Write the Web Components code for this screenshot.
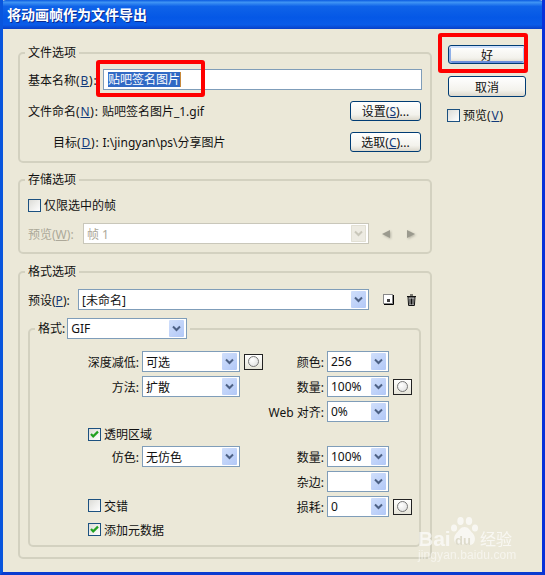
<!DOCTYPE html>
<html>
<head>
<meta charset="utf-8">
<title>export frames</title>
<style>
  html, body { margin: 0; padding: 0; background: #ebe8d8; }
  body { font: 12px "Noto Sans", "Noto Sans CJK SC", sans-serif; color: #111; }
</style>
</head>
<body>
<xp-dialog></xp-dialog>

<script>
const FONT = '"Noto Sans", "Noto Sans CJK SC", sans-serif';

class XpButton extends HTMLElement {
  constructor() {
    super();
    this.attachShadow({ mode: 'open' });
    this.shadowRoot.innerHTML = `
      <style>
        :host { display: flex; box-sizing: border-box; height: 20px; border: 1px solid #003c74; border-radius: 3px;
          background: linear-gradient(#fff, #f3f2ec 70%, #dcd8cc); align-items: center; justify-content: center;
          font: 12px ${FONT}; color: #111; }
        :host([default]) { box-shadow: inset 0 2px 0 #cfe0fb, inset 2px 0 0 #8fb0e8, inset -2px 0 0 #a9c4f0, inset 0 -2px 0 #6b8fdc; }
      </style>
      <span><slot></slot></span>`;
  }
}

class XpCheck extends HTMLElement {
  constructor() {
    super();
    this.attachShadow({ mode: 'open' });
    const tick = this.hasAttribute('checked')
      ? '<svg viewBox="0 0 11 11" width="11" height="11"><path d="M2 5l2.2 2.400L9 2.600" fill="none" stroke="#21a121" stroke-width="2.200"/></svg>'
      : '';
    this.shadowRoot.innerHTML = `
      <style>
        :host { display: flex; align-items: center; gap: 3px; height: 14px; font: 12px ${FONT}; color: #111; }
        .box { box-sizing: border-box; width: 13px; height: 13px; border: 1px solid #1c5180;
          background: linear-gradient(135deg, #dcdcd7, #fff); display: flex; }
      </style>
      <span class="box">${tick}</span><span><slot></slot></span>`;
  }
}

class XpSelect extends HTMLElement {
  constructor() {
    super();
    this.attachShadow({ mode: 'open' });
    this.shadowRoot.innerHTML = `
      <style>
        :host { display: flex; box-sizing: border-box; height: 21px; border: 1px solid #7f9db9; background: #fff;
          padding: 1px 2px 1px 3px; align-items: center; font: 12px ${FONT}; color: #111; }
        .val { flex: 1; white-space: nowrap; overflow: hidden; }
        .arrow { width: 15px; height: 17px; border-radius: 1px; background: linear-gradient(135deg, #d0dffb, #b2c8f7);
          display: flex; align-items: center; justify-content: center; }
        :host([disabled]) { border-color: #c9c7ba; color: #aca899; }
        :host([disabled]) .arrow { background: #edebe2; box-shadow: inset 0 0 0 1px #e2e0d4; }
        :host([disabled]) path { stroke: #c9c7ba; }
      </style>
      <span class="val"><slot></slot></span>
      <span class="arrow"><svg width="9" height="7" viewBox="0 0 9 7"><path d="M1 1.500l3.500 3.500L8 1.500" fill="none" stroke="#4d6185" stroke-width="2"/></svg></span>`;
  }
}

class XpRoundBtn extends HTMLElement {
  constructor() {
    super();
    this.attachShadow({ mode: 'open' });
    this.shadowRoot.innerHTML = `
      <style>
        :host { display: flex; box-sizing: border-box; width: 19px; height: 16px; border: 1px solid #222;
          background: linear-gradient(#fff, #e6e4d8); align-items: center; justify-content: center; }
        i { display: block; width: 11px; height: 11px; border-radius: 50%; border: 1px solid #777;
          background: radial-gradient(circle at 35% 35%, #fff, #ddd); box-sizing: border-box; }
      </style>
      <i></i>`;
  }
}

class XpGroup extends HTMLElement {
  constructor() {
    super();
    this.attachShadow({ mode: 'open' });
    this.shadowRoot.innerHTML = `
      <style>
        :host { display: block; font: 12px ${FONT}; color: #111; }
        fieldset { margin: 0; padding: 0; border: 2px solid #d3d1c0; border-radius: 5px; min-width: 0; }
        legend { padding: 0 3px; margin-left: 5px; height: 14px; line-height: 14px; }
        :host([tall]) legend { height: 21px; line-height: 21px; }
      </style>
      <fieldset>
        <legend><slot name="legend"></slot></legend>
        <slot></slot>
      </fieldset>`;
  }
}

class XpWatermark extends HTMLElement {
  constructor() {
    super();
    this.attachShadow({ mode: 'open' });
    this.shadowRoot.innerHTML = `
      <style>
        :host { position: absolute; left: 415px; top: 516px; width: 100px; height: 46px; color: #fff; opacity: .68;
          font-family: "Liberation Sans", "Noto Sans CJK SC", sans-serif; pointer-events: none; }
        .main { position: absolute; left: 0; top: 13px; font-size: 21px; font-weight: bold; line-height: 20px; }
        svg { position: absolute; left: 32px; top: 1px; }
        .du { position: absolute; left: 37px; top: 19px; font-size: 13px; font-weight: bold; line-height: 12px; color: #d8d6c6; }
        .cn { position: absolute; left: 62px; top: 15px; font-size: 16px; line-height: 17px; }
        .url { position: absolute; left: 0; top: 33px; font-size: 12px; line-height: 13px; white-space: nowrap; letter-spacing: .1px; opacity: .8; }
      </style>
      <span class="main">Bai</span>
      <svg width="29" height="30" viewBox="0 0 29 30" fill="#fff">
        <ellipse cx="4" cy="11" rx="3" ry="3.500"/><ellipse cx="10.500" cy="4" rx="3.200" ry="4"/>
        <ellipse cx="19" cy="4" rx="3.200" ry="4"/><ellipse cx="25" cy="11" rx="3" ry="3.500"/>
        <path d="M14.500 10c4 0 5 3 8 6 4 4 3 12-3 12-2 0-3-1-5-1s-3 1-5 1c-6 0-7-8-3-12 3-3 4-6 8-6z"/>
      </svg>
      <span class="du">du</span>
      <span class="cn">经验</span>
      <span class="url">jingyan.baidu.com</span>`;
  }
}

class XpDialog extends HTMLElement {
  constructor() {
    super();
    this.attachShadow({ mode: 'open' });
    this.shadowRoot.innerHTML = `
      <style>
        :host { display: flex; flex-direction: column; position: relative; box-sizing: border-box; width: 545px; height: 575px;
          border: solid #0a46d8; border-width: 0 3px 3px; border-left-color: #0855dd; border-right-color: #0831d9; border-bottom-color: #0a3bd0;
          background: #ebe8d8; overflow: hidden; font: 12px ${FONT}; color: #111; }
        .title { flex: none; margin: 0 -3px; height: 29px; padding: 0 7px; border-radius: 6px 6px 0 0;
          background: linear-gradient(#0a5ae0 0, #3f94f4 8%, #0f63e8 22%, #0558e6 60%, #0a5ce8 85%, #0840c8 100%);
          color: #fff; font: bold 14px "Noto Sans CJK SC", sans-serif; line-height: 28px; text-shadow: 1px 1px 0 #0a2a90; }
        .body { flex: 1; display: flex; gap: 16px; padding: 17px 0 0 15px; }
        .main { width: 414px; display: flex; flex-direction: column; }
        .side { width: 78px; margin-top: -1px; display: flex; flex-direction: column; }
        .side xp-check { margin: 11px 0 0 -1px; }
        .g1 { margin-bottom: 10px; }
        .g2 { margin-bottom: 11px; }
        .file { display: grid; grid-template-columns: 71px 1fr 71px; column-gap: 4px; row-gap: 11px; padding: 9px 9px 0 8px; height: 101px; box-sizing: border-box; grid-template-rows: 21px 20px 20px; }
        .file > * { align-self: center; }
        .row-input { grid-column: 2 / 4; box-sizing: border-box; height: 21px; margin-right: -1px; border: 1px solid #7f9db9; background: #fff; padding: 2px 4px; display: flex; align-items: center; }
        .sel { background: #316ac5; color: #fff; border-right: 1px solid #c8893a; line-height: 15px; }
        .k { letter-spacing: .8px; }
        .target { padding-left: 25px; white-space: nowrap; }
        u { color: #123a7a; }
        .store { padding: 11px 0 0 8px; height: 65px; box-sizing: border-box; }
        .store .line { display: flex; align-items: center; margin-top: 11px; height: 21px; }
        .dim { color: #aca899; }
        .arrows { display: flex; gap: 15px; margin-left: 12px; }
        .arrows svg { filter: drop-shadow(1px 1px 1px #b5b3a5); }
        .format { padding: 10px 9px 10px 8px; }
        .preset { display: flex; align-items: center; height: 21px; margin-bottom: 8px; }
        .tools { display: flex; gap: 12px; margin-left: 14px; }
        .legend-sel { display: flex; align-items: center; gap: 2px; }
        .grid { display: grid; grid-template-columns: 102px 98px 23px 64px 62px 23px;
          grid-template-rows: 25px 25px 25px 20px 25px 25px 25px 21px; padding: 10px 0 5px 10px; align-items: center; }
        .lab { text-align: right; padding-right: 3px; white-space: nowrap; }
        .chk { grid-column: 1 / 3; padding-left: 48px; }
        .chk.up { margin-bottom: 2px; }
        .rb { margin-left: 4px; }
        .red { position: absolute; box-sizing: border-box; border: 4px solid #f00; border-radius: 3px; pointer-events: none; }
      </style>
      <div class="title">将动画帧作为文件导出</div>
      <div class="body">
        <div class="main">
          <xp-group class="g1">
            <span slot="legend">文件选项</span>
            <div class="file">
              <span>基本名称<span class="k">(<u>B</u>):</span></span>
              <div class="row-input"><span class="sel">贴吧签名图片</span></div>
              <span style="grid-column:1/3;white-space:nowrap">文件命名<span class="k">(<u>N</u>):</span> 贴吧签名图片_1.gif</span>
              <xp-button>设置(<u>S</u>)...</xp-button>
              <span class="target" style="grid-column:1/3">目标<span class="k">(<u>D</u>):</span> I:\\jingyan\\ps\\分享图片</span>
              <xp-button>选取(<u>C</u>)...</xp-button>
            </div>
          </xp-group>

          <xp-group class="g2">
            <span slot="legend">存储选项</span>
            <div class="store">
              <xp-check>仅限选中的帧</xp-check>
              <div class="line">
                <span class="dim" style="width:55px">预览(<u class="dim">W</u>):</span>
                <xp-select disabled style="width:286px">帧 1</xp-select>
                <div class="arrows">
                  <svg width="10" height="10" viewBox="0 0 10 10"><path d="M1 5l8-4v8z" fill="#9b9a8e"/></svg>
                  <svg width="10" height="10" viewBox="0 0 10 10"><path d="M9 5L1 1v8z" fill="#9b9a8e"/></svg>
                </div>
              </div>
            </div>
          </xp-group>

          <xp-group>
            <span slot="legend">格式选项</span>
            <div class="format">
              <div class="preset">
                <span style="width:50px">预设(<u>P</u>):</span>
                <xp-select style="width:291px">[未命名]</xp-select>
                <div class="tools">
                  <svg width="11" height="11" viewBox="0 0 11 11"><rect x=".5" y=".5" width="9" height="9" fill="#fff" stroke="#888"/><path d="M10.500 1v9.500H1" fill="none" stroke="#000"/><path d="M4 5h3v3H4z" fill="#444"/></svg>
                  <svg width="11" height="12" viewBox="0 0 11 12"><path d="M2 3h7l-.6 8.500H2.600z" fill="#ccc" stroke="#111"/><path d="M1 2.500h9M4 1h3" stroke="#111"/><path d="M4 4.500v6M5.500 4.500v6M7 4.500v6" stroke="#111"/></svg>
                </div>
              </div>
              <xp-group tall>
                <span slot="legend" class="legend-sel">格式:<xp-select style="width:120px">GIF</xp-select></span>
                <div class="grid">
                  <span class="lab">深度减低:</span><xp-select>可选</xp-select><xp-round-btn class="rb"></xp-round-btn>
                  <span class="lab">颜色:</span><xp-select>256</xp-select><span></span>

                  <span class="lab">方法:</span><xp-select>扩散</xp-select><span></span>
                  <span class="lab">数量:</span><xp-select>100%</xp-select><xp-round-btn class="rb"></xp-round-btn>

                  <span></span><span></span><span></span>
                  <span class="lab">Web 对齐:</span><xp-select>0%</xp-select><span></span>

                  <xp-check class="chk" checked>透明区域</xp-check><span></span><span></span><span></span><span></span>

                  <span class="lab">仿色:</span><xp-select>无仿色</xp-select><span></span>
                  <span class="lab">数量:</span><xp-select>100%</xp-select><span></span>

                  <span></span><span></span><span></span>
                  <span class="lab">杂边:</span><xp-select></xp-select><span></span>

                  <xp-check class="chk up">交错</xp-check><span></span>
                  <span class="lab">损耗:</span><xp-select>0</xp-select><xp-round-btn class="rb"></xp-round-btn>

                  <xp-check class="chk" checked>添加元数据</xp-check>
                </div>
              </xp-group>
            </div>
          </xp-group>
        </div>

        <div class="side">
          <xp-button default style="height:19px">好</xp-button>
          <xp-button style="margin-top:12px;height:21px">取消</xp-button>
          <xp-check>预览<span class="k">(<u>V</u>)</span></xp-check>
        </div>
      </div>
      <div class="red" style="left:93px;top:60px;width:109px;height:37px"></div>
      <div class="red" style="left:435px;top:33px;width:90px;height:40px"></div>
      <xp-watermark></xp-watermark>
    `;
  }
}

customElements.define('xp-button', XpButton);
customElements.define('xp-check', XpCheck);
customElements.define('xp-select', XpSelect);
customElements.define('xp-round-btn', XpRoundBtn);
customElements.define('xp-group', XpGroup);
customElements.define('xp-watermark', XpWatermark);
customElements.define('xp-dialog', XpDialog);
</script>
</body>
</html>
